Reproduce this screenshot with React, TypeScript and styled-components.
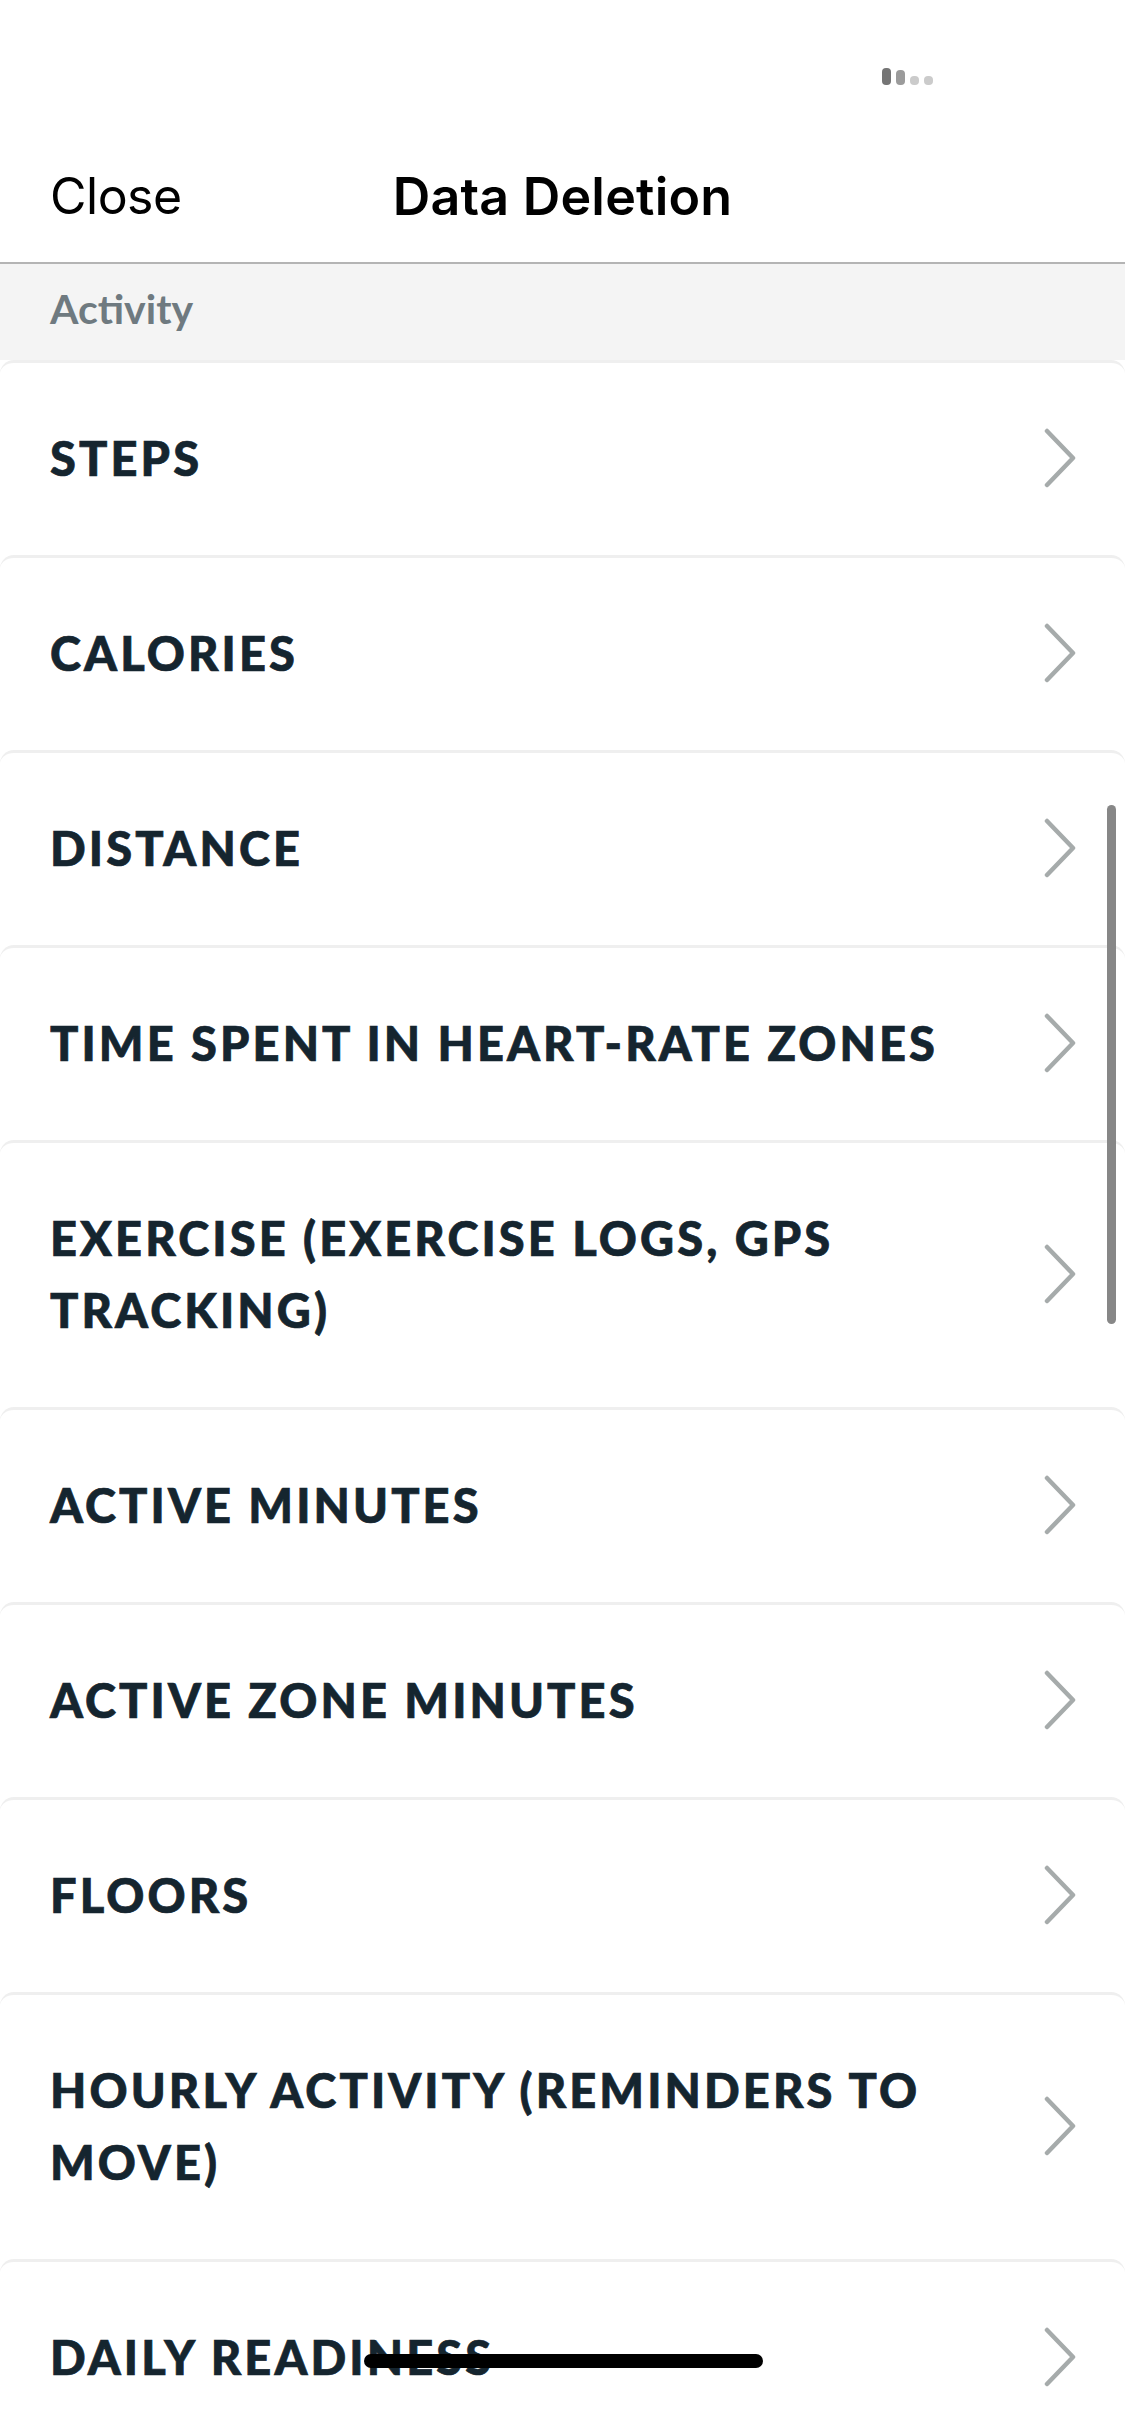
import React from 'react'
import styled, { createGlobalStyle } from 'styled-components'

const GlobalStyle = createGlobalStyle`
  html, body {
    margin: 0;
    padding: 0;
    background: #ffffff;
  }
  * {
    box-sizing: border-box;
  }
`

const Screen = styled.div`
  position: relative;
  width: 1125px;
  height: 2436px;
  overflow: hidden;
  background: #ffffff;
  font-family: Lato, "Noto Sans", sans-serif;
`

const StatusBar = styled.div`
  height: 132px;
  display: flex;
  justify-content: flex-end;
  align-items: flex-start;
  padding: 68px 192px 0 0;
`

const Signal = styled.div`
  display: flex;
  align-items: flex-end;
  gap: 5px;
  height: 17px;
`

const SignalBar = styled.span<{ $h: number; $c: string }>`
  width: 9px;
  height: ${p => p.$h}px;
  border-radius: 4px;
  background: ${p => p.$c};
`

const NavBar = styled.div`
  height: 132px;
  display: grid;
  grid-template-columns: 1fr auto 1fr;
  align-items: center;
  padding: 0 50px 2px;
  border-bottom: 2px solid #b4b4b4;
  font-family: Inter, "Liberation Sans", sans-serif;
  font-size: 50px;
  color: #000000;
`

const NavButton = styled.button`
  justify-self: start;
  background: none;
  border: none;
  padding: 0;
  font: inherit;
  color: inherit;
  letter-spacing: -0.5px;
`

const NavTitle = styled.h1`
  margin: 0;
  font-size: 52px;
  font-weight: 600;
  letter-spacing: 0.2px;
`

const SectionHeader = styled.div`
  height: 96px;
  display: flex;
  align-items: center;
  padding: 0 50px 8px;
  background: #f4f4f4;
  color: #6f7a80;
  font-size: 41px;
  font-weight: 700;
`

const Row = styled.div`
  display: flex;
  align-items: center;
  padding: 59px 48px 61px 50px;
  background: #ffffff;
  border-top: 3px solid #efefef;
  border-radius: 14px 14px 0 0;
`

const RowLabel = styled.span`
  flex: 1;
  max-width: 960px;
  font-size: 47px;
  font-weight: 900;
  letter-spacing: 3.1px;
  line-height: 72px;
  color: #15252f;
  text-transform: uppercase;
  -webkit-text-stroke: 0.7px #15252f;
`

const ChevronWrap = styled.span`
  margin-left: auto;
  display: flex;
`

const ScrollThumb = styled.div`
  position: absolute;
  top: 805px;
  right: 9px;
  width: 9px;
  height: 519px;
  border-radius: 5px;
  background: #878787;
`

const HomeIndicator = styled.div`
  position: absolute;
  bottom: 68px;
  left: 364px;
  width: 399px;
  height: 14px;
  border-radius: 7px;
  background: #000000;
`

function Chevron() {
  return (
    <ChevronWrap>
      <svg width="34" height="60" viewBox="0 0 34 60">
        <polyline
          points="4,3 30,30 4,57"
          fill="none"
          stroke="#a6abab"
          strokeWidth="4.5"
          strokeLinecap="round"
          strokeLinejoin="round"
        />
      </svg>
    </ChevronWrap>
  )
}

const items = [
  'Steps',
  'Calories',
  'Distance',
  'Time spent in heart-rate zones',
  'Exercise (exercise logs, GPS tracking)',
  'Active minutes',
  'Active zone minutes',
  'Floors',
  'Hourly activity (reminders to move)',
  'Daily readiness',
]

export default function App() {
  return (
    <Screen>
      <GlobalStyle />
      <StatusBar>
        <Signal>
          <SignalBar $h={17} $c="#757575" />
          <SignalBar $h={15} $c="#9b9b9b" />
          <SignalBar $h={9} $c="#cbcbcb" />
          <SignalBar $h={9} $c="#cbcbcb" />
        </Signal>
      </StatusBar>
      <NavBar>
        <NavButton>Close</NavButton>
        <NavTitle>Data Deletion</NavTitle>
        <span />
      </NavBar>
      <SectionHeader>Activity</SectionHeader>
      {items.map(item => (
        <Row key={item}>
          <RowLabel>{item}</RowLabel>
          <Chevron />
        </Row>
      ))}
      <ScrollThumb />
      <HomeIndicator />
    </Screen>
  )
}
